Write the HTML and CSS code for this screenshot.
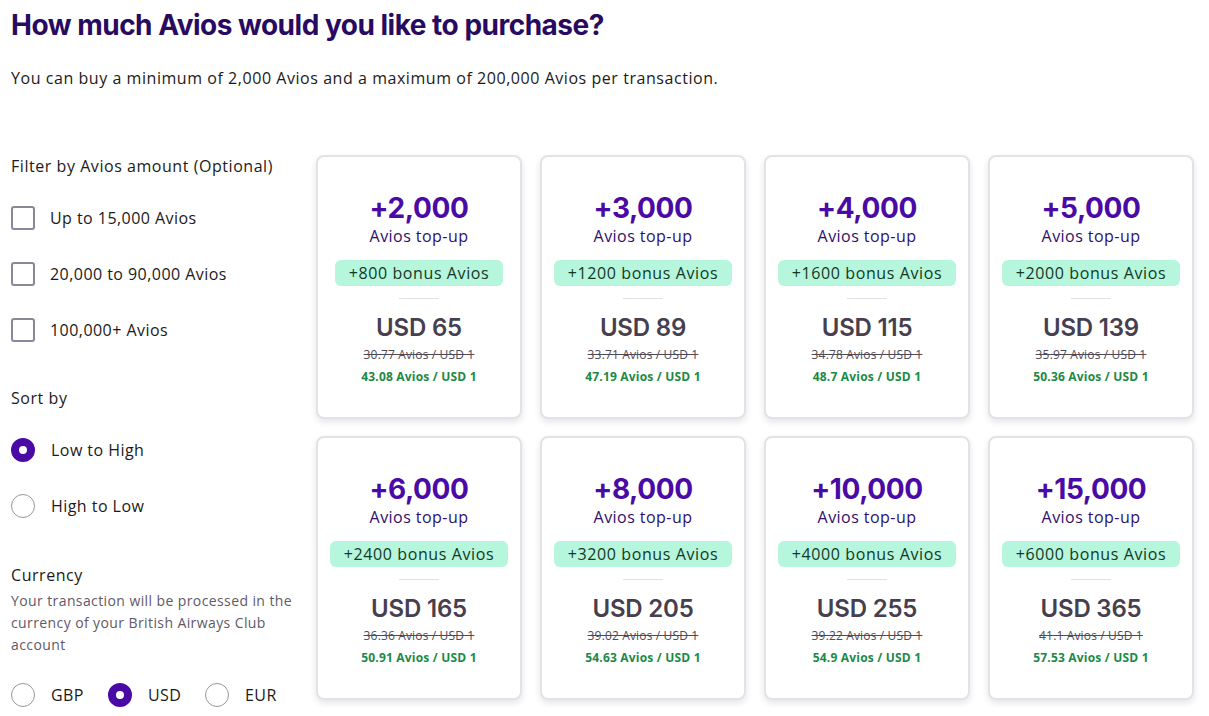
FILE: index.html
```html
<!DOCTYPE html>
<html lang="en">
<head>
<meta charset="utf-8">
<title>Buy Avios</title>
<link rel="stylesheet" href="styles.css">
</head>
<body>
<div class="page">
  <h1 class="title">How much Avios would you like to purchase?</h1>
  <p class="intro">You can buy a minimum of 2,000 Avios and a maximum of 200,000 Avios per transaction.</p>

  <div class="main">
    <aside class="filters">
      <div class="group-label">Filter by Avios amount (Optional)</div>
      <div class="opt"><span class="check"></span><span>Up to 15,000 Avios</span></div>
      <div class="opt"><span class="check"></span><span>20,000 to 90,000 Avios</span></div>
      <div class="opt"><span class="check"></span><span>100,000+ Avios</span></div>

      <div class="group-label sort-label">Sort by</div>
      <div class="opt"><span class="radio on"></span><span>Low to High</span></div>
      <div class="opt"><span class="radio"></span><span>High to Low</span></div>

      <div class="group-label cur-label">Currency</div>
      <div class="cur-desc">Your transaction will be processed in the currency of your British Airways Club account</div>
      <div class="cur-row">
        <div class="opt inline"><span class="radio"></span><span>GBP</span></div>
        <div class="opt inline"><span class="radio on"></span><span>USD</span></div>
        <div class="opt inline"><span class="radio"></span><span>EUR</span></div>
      </div>
    </aside>

    <section class="cards">
      <div class="card"><div class="amt">+2,000</div><div class="sub">Avios top-up</div><div class="pill">+800 bonus Avios</div><div class="rule"></div><div class="price">USD 65</div><div class="old">30.77 Avios / USD 1</div><div class="new">43.08 Avios / USD 1</div></div>
      <div class="card"><div class="amt">+3,000</div><div class="sub">Avios top-up</div><div class="pill">+1200 bonus Avios</div><div class="rule"></div><div class="price">USD 89</div><div class="old">33.71 Avios / USD 1</div><div class="new">47.19 Avios / USD 1</div></div>
      <div class="card"><div class="amt">+4,000</div><div class="sub">Avios top-up</div><div class="pill">+1600 bonus Avios</div><div class="rule"></div><div class="price">USD 115</div><div class="old">34.78 Avios / USD 1</div><div class="new">48.7 Avios / USD 1</div></div>
      <div class="card"><div class="amt">+5,000</div><div class="sub">Avios top-up</div><div class="pill">+2000 bonus Avios</div><div class="rule"></div><div class="price">USD 139</div><div class="old">35.97 Avios / USD 1</div><div class="new">50.36 Avios / USD 1</div></div>
      <div class="card"><div class="amt">+6,000</div><div class="sub">Avios top-up</div><div class="pill">+2400 bonus Avios</div><div class="rule"></div><div class="price">USD 165</div><div class="old">36.36 Avios / USD 1</div><div class="new">50.91 Avios / USD 1</div></div>
      <div class="card"><div class="amt">+8,000</div><div class="sub">Avios top-up</div><div class="pill">+3200 bonus Avios</div><div class="rule"></div><div class="price">USD 205</div><div class="old">39.02 Avios / USD 1</div><div class="new">54.63 Avios / USD 1</div></div>
      <div class="card"><div class="amt">+10,000</div><div class="sub">Avios top-up</div><div class="pill">+4000 bonus Avios</div><div class="rule"></div><div class="price">USD 255</div><div class="old">39.22 Avios / USD 1</div><div class="new">54.9 Avios / USD 1</div></div>
      <div class="card"><div class="amt">+15,000</div><div class="sub">Avios top-up</div><div class="pill">+6000 bonus Avios</div><div class="rule"></div><div class="price">USD 365</div><div class="old">41.1 Avios / USD 1</div><div class="new">57.53 Avios / USD 1</div></div>
    </section>
  </div>
</div>
</body>
</html>
```

FILE: styles.css
```css
* { box-sizing: border-box; }
html, body { margin: 0; padding: 0; background: #fff; }
body {
  font-family: "Open Sans", "Liberation Sans", sans-serif;
  color: #1c1a20;
  letter-spacing: 0.45px;
  overflow: hidden;
}
.page { padding: 0 15px 0 11px; }

.title {
  margin: 0;
  padding-top: 6px;
  font-family: "Inter", "Liberation Sans", sans-serif;
  font-size: 28px;
  line-height: 38px;
  font-weight: 700;
  letter-spacing: -0.5px;
  color: #280b60;
}
.intro {
  margin: 22px 0 0;
  font-size: 16px;
  line-height: 24px;
  letter-spacing: 0.55px;
  color: #1c1a20;
}

.main {
  display: flex;
  margin-top: 65px;
}

.filters {
  width: 305px;
  flex: none;
}
.group-label {
  font-size: 16px;
  line-height: 22px;
  letter-spacing: 0.55px;
  color: #1c1a20;
}
.opt {
  display: flex;
  align-items: center;
  height: 24px;
  margin-top: 30px;
  font-size: 16px;
  color: #1c1a20;
}
.opt + .opt { margin-top: 32px; }
.group-label + .opt { margin-top: 29px; }
.check {
  width: 24px;
  height: 24px;
  border: 2px solid #8d8598;
  border-radius: 3px;
  margin-right: 15px;
  flex: none;
}
.radio {
  width: 24px;
  height: 24px;
  border: 1px solid #9a94a3;
  border-radius: 50%;
  margin-right: 16px;
  flex: none;
}
.radio.on {
  border: 8px solid #4a0aa6;
  background: #fff;
}
.sort-label { margin-top: 45px; }
.sort-label + .opt { margin-top: 29px; }
.cur-label { margin-top: 46px; }
.cur-desc {
  margin-top: 4px;
  font-size: 14px;
  line-height: 22px;
  letter-spacing: 0.4px;
  color: #5f5967;
  width: 292px;
}
.cur-row {
  display: flex;
  margin-top: 27px;
}
.cur-row .opt.inline { margin-top: 0; width: 97px; }

.cards {
  display: grid;
  grid-template-columns: repeat(4, 206px);
  grid-auto-rows: 264px;
  column-gap: 18px;
  row-gap: 17px;
}
.card {
  border: 2px solid #e4e2e9;
  border-radius: 8px;
  background: #fff;
  box-shadow: 0 3px 6px rgba(40, 30, 60, 0.12);
  display: flex;
  flex-direction: column;
  align-items: center;
  padding-top: 34px;
}
.amt {
  font-family: "Inter", "Liberation Sans", sans-serif;
  font-size: 28px;
  line-height: 34px;
  font-weight: 700;
  letter-spacing: -0.4px;
  color: #4a0aa6;
}
.sub {
  font-size: 16px;
  line-height: 22px;
  color: #2d0f6b;
}
.pill {
  margin-top: 13px;
  height: 26px;
  line-height: 26px;
  padding: 0 14px;
  border-radius: 6px;
  background: #b6f6dc;
  color: #143826;
  font-size: 16px;
  letter-spacing: 0.6px;
  text-align: center;
  white-space: nowrap;
}
.rule {
  width: 40px;
  height: 1px;
  background: #e2e0e6;
  margin-top: 12px;
}
.price {
  margin-top: 14px;
  font-family: "Inter", "Liberation Sans", sans-serif;
  font-size: 24px;
  line-height: 30px;
  font-weight: 600;
  letter-spacing: -0.2px;
  color: #463f4f;
}
.old {
  margin-top: 3px;
  font-size: 12px;
  line-height: 18px;
  letter-spacing: 0.15px;
  color: #4f4a56;
  text-decoration: line-through;
}
.new {
  margin-top: 4px;
  font-size: 12px;
  line-height: 18px;
  letter-spacing: 0.2px;
  font-weight: 700;
  color: #1b8a46;
}
```
